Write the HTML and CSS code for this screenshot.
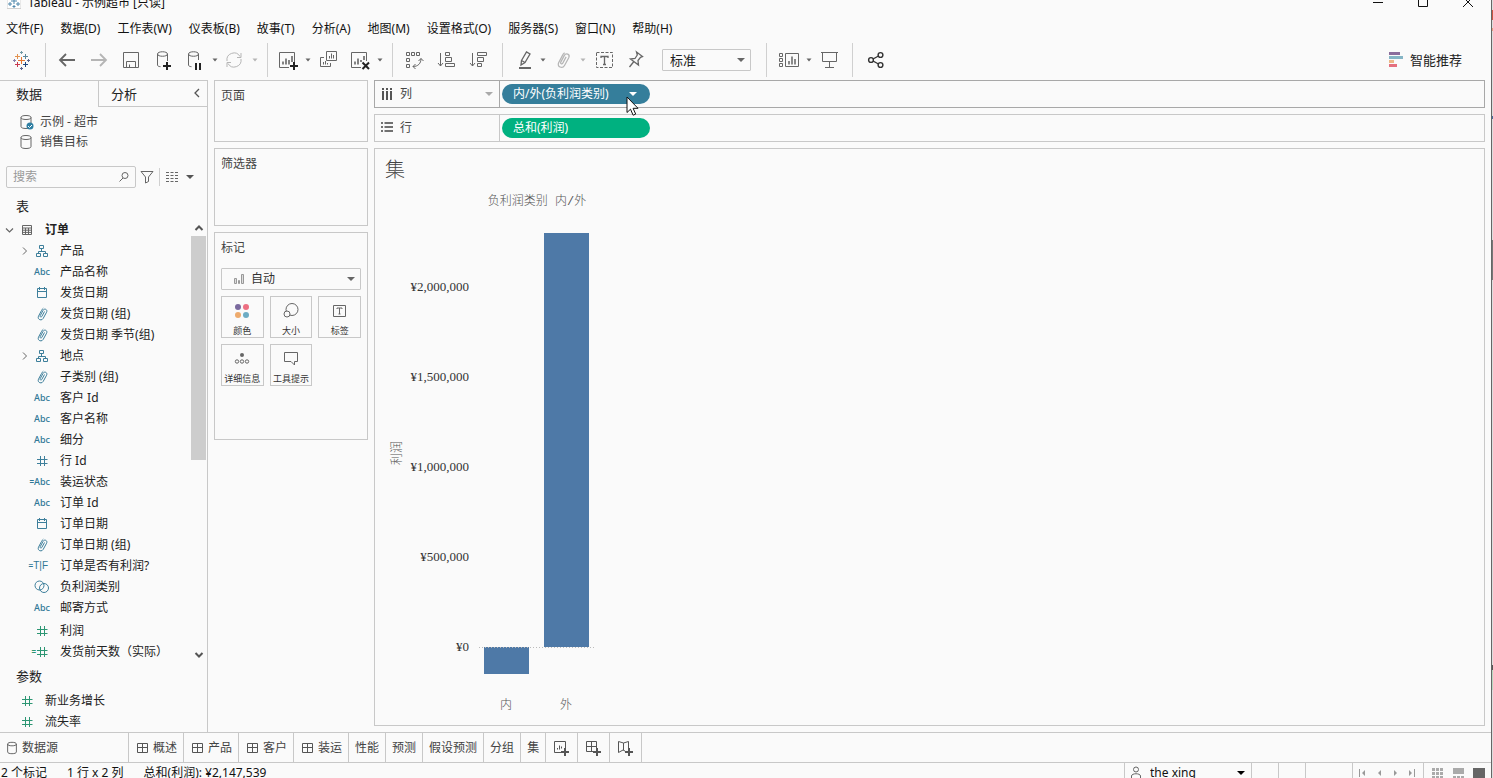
FILE: index.html
```html
<!DOCTYPE html>
<html lang="zh-CN">
<head>
<meta charset="utf-8">
<title>Tableau - 示例超市</title>
<link rel="stylesheet" href="styles.css">
</head>
<body>
<svg class="defs" aria-hidden="true">
  <symbol id="caret" viewBox="0 0 8 8"><path d="M0 2h8L4 6z" fill="currentColor"/></symbol>
  <symbol id="caret-s" viewBox="0 0 8 8"><path d="M1.500 2.500h5L4 5.500z" fill="currentColor"/></symbol>
  <symbol id="db" viewBox="0 0 16 16"><path d="M3 3.500v9c0 1.300 2 2 5 2s5-.7 5-2v-9M3 3.500c0-1.300 2-2 5-2s5 .7 5 2-2 2-5 2-5-.7-5-2z"/></symbol>
  <symbol id="dash" viewBox="0 0 12 12"><path d="M1.500 1.500h10v9h-10zM6.500 1.500v9M1.500 5.500h10"/></symbol>
  <symbol id="hier" viewBox="0 0 16 16"><path d="M5.500 2.500h4v3h-4zM7.500 5.500v3M4.500 11V8.500h7V11M2.500 10.500h4v3h-4zM9.500 10.500h4v3h-4z"/></symbol>
  <symbol id="cal" viewBox="0 0 16 16"><path d="M3.500 3.500h9v9h-9zM3.500 6.500h9M5.500 2v3M10.500 2v3"/></symbol>
  <symbol id="clip" viewBox="0 0 16 16"><path d="M10.500 5.500L7.800 10.500c-.7 1.200-2.200.4-1.600-.8l2.900-5.400c1.300-2.400 4.800-.8 3.500 1.900l-3.400 6.200c-1.700 3-6.200 1-4.700-2.200l3-5.700c.5-1 1-1.700 1.800-2.300"/></symbol>
  <symbol id="hash" viewBox="0 0 16 16"><path d="M6.500 3v10M10.500 3v10M3 6.500h10.500M3 10.500h10.500"/></symbol>
  <symbol id="sets" viewBox="0 0 16 16"><circle cx="5.500" cy="6.500" r="4.500"/><circle cx="10" cy="9" r="4.500"/></symbol>
  <symbol id="right" viewBox="0 0 12 12"><path d="M5 2.500L8.500 6 5 9.500"/></symbol>
</svg>
<div class="desktop">
<div class="app">
  <header class="title-bar">
    <svg class="app-icon" width="14" height="16" viewBox="0 0 14 16"><path d="M0 0h14v15.500H0z" fill="#fff" stroke="#d0d0d0"/><path d="M7 5v6M4 8h6M3 3v4M1 5h4M11 3v4M9 5h4M3 9v4M1 11h4M11 9v4M9 11h4M7 12v3M5.500 13.500h3" stroke="#4f87ab" fill="none"/></svg>
    <span class="caption">Tableau - 示例超市 [只读]</span>
    <div class="window-buttons">
      <button aria-label="最小化"><svg width="12" height="16" viewBox="0 0 12 16"><path d="M1 8.500h10"/></svg></button>
      <button aria-label="最大化"><svg width="12" height="16" viewBox="0 0 12 16"><path d="M1.500 3.500h9v9h-9z"/></svg></button>
      <button aria-label="关闭"><svg width="12" height="16" viewBox="0 0 12 16"><path d="M1 3l10 10M11 3L1 13"/></svg></button>
    </div>
  </header>
  <nav class="menu-bar">
    <button>文件(F)</button><button>数据(D)</button><button>工作表(W)</button><button>仪表板(B)</button><button>故事(T)</button><button>分析(A)</button><button>地图(M)</button><button>设置格式(O)</button><button>服务器(S)</button><button>窗口(N)</button><button>帮助(H)</button>
  </nav>
  <div class="toolbar">
    <div class="group">
      <button class="tool" aria-label="开始页面"><svg width="20" height="20" viewBox="0 0 20 20"><path d="M10.500 7v7M7 10.500h7" stroke="#e8762d"/><path d="M6.500 4v5M4 6.500h5" stroke="#e3924f"/><path d="M14.500 4v5M12 6.500h5" stroke="#5b879b"/><path d="M6.500 12v5M4 14.500h5" stroke="#c8394e"/><path d="M14.500 12v5M12 14.500h5" stroke="#1f457e"/><path d="M10.500 1v3M9 2.500h3" stroke="#7199a6"/><path d="M10.500 17v3M9 18.500h3" stroke="#5b6591"/><path d="M3.500 9v3M2 10.500h3" stroke="#8a7fab"/><path d="M17.500 9v3M16 10.500h3" stroke="#5b6591"/></svg></button>
    </div>
    <div class="group">
      <button class="tool" aria-label="撤消"><svg width="20" height="20" viewBox="0 0 20 20"><path stroke-width="1.800" d="M18 10H3M9 4l-6 6 6 6"/></svg></button>
      <button class="tool off" aria-label="重做"><svg width="20" height="20" viewBox="0 0 20 20"><path stroke-width="1.800" d="M2 10h15M11 4l6 6-6 6"/></svg></button>
      <button class="tool" aria-label="保存"><svg width="20" height="20" viewBox="0 0 20 20"><path d="M2.500 2.500h15v15h-15zM5.500 17.500v-6h9v6M8.500 17.500v-3"/></svg></button>
      <button class="tool" aria-label="新建数据源"><svg width="20" height="20" viewBox="0 0 20 20"><path d="M4.500 4v11c0 1 1 1.500 3 1.700M14.500 4v7M4.500 4c0-3 10-3 10 0s-10 3-10 0z"/><path stroke="#222" stroke-width="2" d="M14 12v8M10 16h8"/></svg></button>
      <button class="tool" aria-label="暂停自动更新"><svg width="20" height="20" viewBox="0 0 20 20"><path d="M3.500 4v11c0 1 1 1.500 3 1.700M13.500 4v6M3.500 4c0-3 10-3 10 0s-10 3-10 0z"/><path stroke="#222" stroke-width="2" d="M11 13v7M15 13v7"/></svg></button>
      <button class="drop" aria-label="更新选项"><svg width="8" height="8"><use href="#caret-s"/></svg></button>
      <button class="tool off" aria-label="运行更新"><svg width="20" height="20" viewBox="0 0 20 20"><path d="M2 11a7 7 0 0 1 13-4.500M16 9a7 7 0 0 1-13 4.500M16 3v4.500h-4M2 17v-4.500h4"/></svg></button>
      <button class="drop off" aria-label="运行选项"><svg width="8" height="8"><use href="#caret-s"/></svg></button>
    </div>
    <div class="group g3">
      <button class="tool" aria-label="新建工作表"><svg width="20" height="20" viewBox="0 0 20 20"><path d="M11 17.500H1.500v-15h15V12"/><path stroke-width="1.600" d="M5 14.500v-3M8 14.500v-6M11 14.500V10M14 12V6"/><path stroke="#222" stroke-width="2" d="M16 12v8M12 16h8"/></svg></button>
      <button class="drop" aria-label="新建选项"><svg width="8" height="8"><use href="#caret-s"/></svg></button>
      <button class="tool" aria-label="复制"><svg width="20" height="20" viewBox="0 0 20 20"><path d="M8.500 1.500h10v9h-10zM6 7.500H2.500v9h10V13M11.500 8.500V6M13.500 8.500v-5M15.500 8.500V5M5.500 14.500V12M7.500 14.500V11M9.500 14.500V13"/></svg></button>
      <button class="tool" aria-label="清除工作表"><svg width="20" height="20" viewBox="0 0 20 20"><path d="M11 17.500H1.500v-15h15V11"/><path stroke-width="1.600" d="M5 14.500v-3M8 14.500v-6M11 12v-2M14 10V6"/><path stroke="#222" stroke-width="2" d="M12.500 12.500l6.500 6.500M19 12.500L12.500 19"/></svg></button>
      <button class="drop" aria-label="清除选项"><svg width="8" height="8"><use href="#caret-s"/></svg></button>
    </div>
    <div class="group">
      <button class="tool" aria-label="交换行和列"><svg width="20" height="20" viewBox="0 0 20 20"><path d="M2.500 2.500h3v3h-3zM7.500 2.500h3v3h-3zM12.500 2.500h3v3h-3zM2.500 8.500h3v3h-3zM2.500 14.500h3v3h-3zM9 16.500c5 0 8-3 8-8M14.500 11l2.500-2.500 2.500 2.500M11.500 14L9 16.500l2.500 2.500"/></svg></button>
      <button class="tool" aria-label="升序排序"><svg width="20" height="20" viewBox="0 0 20 20"><path d="M4.500 3v13M2 13l2.500 3L7 13M9.500 2.500h4v3h-4zM9.500 7.500h6v4h-6zM9.500 13.500h9v3h-9z"/></svg></button>
      <button class="tool" aria-label="降序排序"><svg width="20" height="20" viewBox="0 0 20 20"><path d="M4.500 3v13M2 13l2.500 3L7 13M9.500 2.500h9v3h-9zM9.500 7.500h6v4h-6zM9.500 13.500h4v3h-4z"/></svg></button>
    </div>
    <div class="group g5">
      <button class="tool" aria-label="突出显示"><svg width="20" height="20" viewBox="0 0 20 20"><path stroke-width="1.300" d="M8.500 10.500l5-8.500 3.500 2-5 8.500-4 2.500zM8.500 10.500l3.500 2"/><path stroke-width="2" d="M6 18h12"/></svg></button>
      <button class="drop" aria-label="突出显示选项"><svg width="8" height="8"><use href="#caret-s"/></svg></button>
      <button class="tool off" aria-label="组成员"><svg width="20" height="20"><use href="#clip"/></svg></button>
      <button class="drop off" aria-label="组选项"><svg width="8" height="8"><use href="#caret-s"/></svg></button>
      <button class="tool" aria-label="显示标记标签"><svg width="20" height="20" viewBox="0 0 20 20"><path stroke-dasharray="3 1.500" d="M3.500 2.500h16v15h-16z"/><path stroke-width="1.300" d="M8 8V6.500h7V8M11.500 6.500v8M10 14.500h3"/></svg></button>
      <button class="tool" aria-label="固定轴"><svg width="20" height="20" viewBox="0 0 20 20"><path stroke-width="1.300" d="M11.500 2l6 4.500-2 .8-2.500 3.200.5 4.500-8-6 4.500-.5 2.300-3.500zM8.500 12L4.500 17"/></svg></button>
      <span class="picker fit"><select aria-label="适合"><option>标准</option></select><svg class="arrow" width="8" height="8"><use href="#caret"/></svg></span>
    </div>
    <div class="group g6">
      <button class="tool" aria-label="显示/隐藏卡"><svg width="20" height="20" viewBox="0 0 20 20"><path d="M.5 3.500h3v3h-3zM.5 8.500h3v3h-3zM.5 13.500h3v3h-3zM6.500 3.500h13v13h-13z"/><path stroke-width="1.500" d="M10 14.500V11M13 14.500v-8M16 14.500V9"/></svg></button>
      <button class="drop" aria-label="卡选项"><svg width="8" height="8"><use href="#caret-s"/></svg></button>
      <button class="tool" aria-label="演示模式"><svg width="20" height="20" viewBox="0 0 20 20"><path d="M2 2.500h17M3.500 2.500v9h14v-9M10.500 11.500v6M6 17.500h9"/></svg></button>
    </div>
    <div class="group last">
      <button class="tool" aria-label="共享"><svg width="20" height="20" viewBox="0 0 20 20"><g stroke="#333" stroke-width="1.400"><circle cx="6" cy="10" r="2.400"/><circle cx="15.500" cy="5" r="2.400"/><circle cx="15.500" cy="15" r="2.400"/><path d="M8 9l5.500-3M8 11l5.500 3"/></g></svg></button>
    </div>
    <button class="show-me"><svg width="14" height="16" viewBox="0 0 14 16"><path fill="#8b6d9c" d="M0 0h11v3H0z"/><path fill="#85b5c5" d="M0 4h14v3H0z"/><path fill="#ecb887" d="M0 8h5v3H0z"/><path fill="#e5707e" d="M0 12h8v3H0z"/></svg>智能推荐</button>
  </div>

  <main class="work">
    <aside class="sidebar">
      <div class="side-tabs" role="tablist">
        <button role="tab" class="side-tab active">数据</button>
        <button role="tab" class="side-tab">分析<svg width="8" height="12" viewBox="0 0 8 12"><path d="M6 1L2 5l4 4" fill="none" stroke="#555" stroke-width="1.300"/></svg></button>
      </div>
      <ul class="sources">
        <li><svg class="ic" width="16" height="16"><use href="#db"/><circle cx="12" cy="12" r="3.500" fill="#2f7fa3" stroke="none"/><path d="M10 12l1.500 1.500L14 11" stroke="#fff"/></svg>示例 - 超市</li>
        <li><svg class="ic" width="16" height="16"><use href="#db"/></svg>销售目标</li>
      </ul>
      <div class="search-row">
        <label class="search"><input type="text" placeholder="搜索" aria-label="搜索"><svg width="12" height="12" viewBox="0 0 12 12"><circle cx="7" cy="4.500" r="3"/><path d="M5 7L1.500 10.500"/></svg></label>
        <button aria-label="筛选字段"><svg width="14" height="14" viewBox="0 0 14 14"><path d="M1 1.500h12L8.500 7v4.500L5.500 13V7z"/></svg></button>
        <button class="view-as" aria-label="查看方式"><svg width="12" height="10" viewBox="0 0 12 10"><path d="M0 .5h3M4.500.5h3M9 .5h3M0 3.500h3M4.500 3.500h3M9 3.500h3M0 6.500h3M4.500 6.500h3M9 6.500h3M0 9.500h3M4.500 9.500h3M9 9.500h3"/></svg><svg width="8" height="8"><use href="#caret"/></svg></button>
      </div>
      <h2 class="side-heading">表</h2>
      <div class="tree">
        <ul class="fields">
          <li class="table-name"><svg class="ic gray" width="12" height="12" viewBox="0 0 12 12"><path stroke-width="1.200" d="M3 4.500l3.500 3.500L10 4.500"/></svg><svg class="ic gray" width="12" height="12" viewBox="0 0 12 12"><path d="M1.500 1.500h9v9h-9zM1.500 4h9M1.500 6.200h9M1.500 8.400h9M4.500 4v6.500M7.500 4v6.500"/></svg>订单</li>
          <li><i class="tog"><svg width="12" height="12"><use href="#right"/></svg></i><i class="kind"><svg width="16" height="16"><use href="#hier"/></svg></i>产品</li>
          <li><i class="tog"></i><i class="kind">Abc</i>产品名称</li>
          <li><i class="tog"></i><i class="kind"><svg width="16" height="16"><use href="#cal"/></svg></i>发货日期</li>
          <li><i class="tog"></i><i class="kind"><svg width="16" height="16"><use href="#clip"/></svg></i>发货日期 (组)</li>
          <li><i class="tog"></i><i class="kind"><svg width="16" height="16"><use href="#clip"/></svg></i>发货日期 季节(组)</li>
          <li><i class="tog"><svg width="12" height="12"><use href="#right"/></svg></i><i class="kind"><svg width="16" height="16"><use href="#hier"/></svg></i>地点</li>
          <li><i class="tog"></i><i class="kind"><svg width="16" height="16"><use href="#clip"/></svg></i>子类别 (组)</li>
          <li><i class="tog"></i><i class="kind">Abc</i>客户 Id</li>
          <li><i class="tog"></i><i class="kind">Abc</i>客户名称</li>
          <li><i class="tog"></i><i class="kind">Abc</i>细分</li>
          <li><i class="tog"></i><i class="kind"><svg width="16" height="16"><use href="#hash"/></svg></i>行 Id</li>
          <li><i class="tog"></i><i class="kind"><b>=</b>Abc</i>装运状态</li>
          <li><i class="tog"></i><i class="kind">Abc</i>订单 Id</li>
          <li><i class="tog"></i><i class="kind"><svg width="16" height="16"><use href="#cal"/></svg></i>订单日期</li>
          <li><i class="tog"></i><i class="kind"><svg width="16" height="16"><use href="#clip"/></svg></i>订单日期 (组)</li>
          <li><i class="tog"></i><i class="kind flag"><b>=</b>T|F</i>订单是否有利润?</li>
          <li><i class="tog"></i><i class="kind"><svg width="16" height="16"><use href="#sets"/></svg></i>负利润类别</li>
          <li><i class="tog"></i><i class="kind">Abc</i>邮寄方式</li>
          <li class="measure first"><i class="tog"></i><i class="kind"><svg width="16" height="16"><use href="#hash"/></svg></i>利润</li>
          <li class="measure"><i class="tog"></i><i class="kind calc"><b>=</b><svg width="12" height="16" viewBox="2 0 12 16"><use href="#hash" width="16" height="16"/></svg></i>发货前天数（实际）</li>
        </ul>
        <div class="scrollbar">
          <svg width="10" height="8" viewBox="0 0 10 8"><path d="M1.500 6L5 2.500 8.500 6"/></svg>
          <div class="track"><div class="thumb"></div></div>
          <svg width="10" height="8" viewBox="0 0 10 8"><path d="M1.500 2L5 5.500 8.500 2"/></svg>
        </div>
      </div>
      <h2 class="side-heading params-heading">参数</h2>
      <ul class="fields params">
        <li class="measure"><i class="kind"><svg width="16" height="16"><use href="#hash"/></svg></i>新业务增长</li>
        <li class="measure"><i class="kind"><svg width="16" height="16"><use href="#hash"/></svg></i>流失率</li>
      </ul>
    </aside>

    <div class="cards">
      <section class="card pages"><h3>页面</h3></section>
      <section class="card filters"><h3>筛选器</h3></section>
      <section class="card marks"><h3>标记</h3>
        <span class="picker mark-type"><svg class="lead" width="12" height="12" viewBox="0 0 12 12"><path fill="#ddd" stroke="#999" d="M1.500 5.500h2v5h-2zM5.500 7.500h1v3h-1zM8.500 1.500h2v9h-2z"/></svg><select aria-label="标记类型"><option>自动</option></select><svg class="arrow" width="8" height="8"><use href="#caret"/></svg></span>
        <div class="mark-grid">
          <button><svg width="20" height="20" viewBox="0 0 20 20"><g stroke="none"><circle cx="6" cy="6" r="3" fill="#7a6a9e"/><circle cx="14" cy="6" r="3" fill="#ed6f82"/><circle cx="6" cy="14" r="3" fill="#eeab6d"/><circle cx="14" cy="14" r="3" fill="#6dacc4"/></g></svg>颜色</button>
          <button><svg width="20" height="20" viewBox="0 0 20 20"><circle cx="11" cy="8.500" r="6"/><circle cx="6" cy="13" r="3" fill="#fafafa"/></svg>大小</button>
          <button><svg width="20" height="20" viewBox="0 0 20 20"><path d="M3.500 4.500h12v11h-12zM7 8V7h5v1M9.500 7v6M8.500 13h2"/></svg>标签</button>
          <button><svg width="20" height="20" viewBox="0 0 20 20"><circle cx="10" cy="6" r="2" fill="#666" stroke="none"/><circle cx="5" cy="12.500" r="1.700"/><circle cx="10" cy="12.500" r="1.700"/><circle cx="15" cy="12.500" r="1.700"/></svg>详细信息</button>
          <button><svg width="20" height="20" viewBox="0 0 20 20"><path d="M3.500 3.500h13v9h-3V16L10 12.500H3.500z"/></svg>工具提示</button>
        </div>
      </section>
    </div>

    <div class="stage">
      <div class="shelf columns">
        <div class="shelf-label"><svg width="14" height="14" viewBox="0 0 14 14"><path stroke="#555" stroke-width="2" d="M3 4v9M7 4v9M11 4v9M3 1v2M7 1v2M11 1v2"/></svg>列<svg class="shelf-drop" width="8" height="8"><use href="#caret"/></svg></div>
        <button class="pill dimension">内/外(负利润类别)<svg width="8" height="8"><use href="#caret"/></svg>
          <svg class="pointer" width="14" height="22" viewBox="0 0 14 22"><path d="M1 1v15.500l3.500-3.300 2.600 6 2.600-1.100-2.600-5.800H12z" fill="#fff" stroke="#111"/></svg></button>
      </div>
      <div class="shelf rows">
        <div class="shelf-label"><svg width="14" height="14" viewBox="0 0 14 14"><path stroke="#444" stroke-width="1.600" d="M1 2h2M4.500 2H13M1 6h2M4.500 6H13M1 10h2M4.500 10H13"/></svg>行</div>
        <button class="pill sum">总和(利润)</button>
      </div>
      <section class="view">
        <h1>集</h1>
        <svg class="chart" width="240" height="540" viewBox="0 0 240 540">
          <text class="head" x="162" y="20">负利润类别 内/外</text>
          <text class="axis-title" transform="rotate(-90 26 268)" x="26" y="268">利润</text>
          <g class="ticks">
            <text x="94" y="106">¥2,000,000</text>
            <text x="94" y="196">¥1,500,000</text>
            <text x="94" y="286">¥1,000,000</text>
            <text x="94" y="376">¥500,000</text>
            <text x="94" y="466">¥0</text>
          </g>
          <rect class="bar" x="109" y="462" width="45" height="27"/>
          <rect class="bar" x="169" y="48" width="45" height="414"/>
          <path class="zero" d="M104 462.500h116"/>
          <text class="head" x="131" y="524">内</text>
          <text class="head" x="191" y="524">外</text>
        </svg>
      </section>
    </div>
  </main>

  <nav class="sheet-tabs">
    <button class="source-tab"><svg width="12" height="14" viewBox="2 0 12 16"><use href="#db" width="16" height="16"/></svg>数据源</button>
    <button class="dash"><svg width="12" height="12"><use href="#dash"/></svg>概述</button>
    <button class="dash"><svg width="12" height="12"><use href="#dash"/></svg>产品</button>
    <button class="dash"><svg width="12" height="12"><use href="#dash"/></svg>客户</button>
    <button class="dash"><svg width="12" height="12"><use href="#dash"/></svg>装运</button>
    <button>性能</button><button>预测</button><button>假设预测</button><button>分组</button><button>集</button>
    <button class="add" aria-label="新建工作表"><svg width="16" height="16" viewBox="0 0 16 16"><path d="M8 12.500H1.500v-11h11V8M4.500 9.500V8M6.500 9.500v-4M8.500 8.500v-2"/><path stroke-width="2" d="M12 8v8M8 12h8"/></svg></button>
    <button class="add" aria-label="新建仪表板"><svg width="16" height="16" viewBox="0 0 16 16"><path d="M8 11.500H1.500v-10h10V8M6.500 1.500v10M1.500 6.500h10"/><path stroke-width="2" d="M12 8v8M8 12h8"/></svg></button>
    <button class="add" aria-label="新建故事"><svg width="16" height="16" viewBox="0 0 16 16"><path d="M8 11l-2-1-4.500 2.500v-11L6.500 3l5-1.500V8M6.500 3v7"/><path stroke-width="2" d="M12 8v8M8 12h8"/></svg></button>
  </nav>
  <footer class="status">
    <div class="stats"><span>2 个标记</span><span>1 行 x 2 列</span><span>总和(利润): ¥2,147,539</span></div>
    <div class="cell user"><svg class="ic gray" width="12" height="16" viewBox="0 0 12 16"><circle cx="6" cy="4.500" r="2.500"/><path d="M1.500 14v-3c0-3 9-3 9 0v3z"/></svg><span class="picker"><select aria-label="用户"><option>the xing</option></select><svg class="arrow" width="8" height="8"><use href="#caret"/></svg></span></div>
    <div class="cell slot"></div>
    <div class="cell slot"></div>
    <div class="cell slot wide"></div>
    <div class="cell pager">
      <button aria-label="第一个"><svg width="8" height="8" viewBox="0 0 8 8"><path d="M0 0h1v8H0zM6 1v6L3 4z"/></svg></button>
      <button aria-label="上一个"><svg width="8" height="8" viewBox="0 0 8 8"><path d="M6 1v6L3 4z"/></svg></button>
      <button aria-label="下一个"><svg width="8" height="8" viewBox="0 0 8 8"><path d="M2 1v6l3-3z"/></svg></button>
      <button aria-label="最后一个"><svg width="8" height="8" viewBox="0 0 8 8"><path d="M6 0h1v8H6zM1 1v6l3-3z"/></svg></button>
    </div>
    <div class="cell sorters">
      <button aria-label="显示工作表排序程序"><svg width="12" height="12" viewBox="0 0 12 12"><path fill="#aaa" d="M0 1h3v3H0zM4 1h3v3H4zM8 1h3v3H8zM0 5h3v3H0zM4 5h3v3H4zM8 5h3v3H8zM0 9h3v3H0zM4 9h3v3H4zM8 9h3v3H8z"/></svg></button>
      <button aria-label="显示连环缩略图"><svg width="12" height="12" viewBox="0 0 12 12"><path fill="#aaa" d="M0 1h11v6H0zM0 9h3v3H0zM4 9h3v3H4zM8 9h3v3H8z"/></svg></button>
      <button aria-label="显示标签"><svg width="12" height="12" viewBox="0 0 12 12"><path fill="#666" d="M0 1h12v11H0z"/></svg></button>
    </div>
  </footer>
</div>
</div>
</body>
</html>
```
FILE: styles.css
```css
* { box-sizing: border-box; }
body, ul, h1, h2, h3 { margin: 0; padding: 0; }
body {
  font: 12px/20px "Noto Sans", "Noto Sans CJK SC", sans-serif;
  color: #222;
  background: #fafafa;
}
ul { list-style: none; }
h1, h2, h3 { font-weight: 400; }
i { font-style: normal; }
button, select, input { font: inherit; color: inherit; background: none; border: 0; padding: 0; margin: 0; }
button { white-space: nowrap; }
svg { display: block; flex: none; fill: none; stroke: none; }
.defs { position: absolute; width: 0; height: 0; }
.defs symbol { fill: none; }
.ic, .kind svg, .tog svg { stroke: #666; }

.desktop {
  height: 100vh;
  padding-right: 1px;
  background: linear-gradient(#ddd 0 10px, #c54 10px 20px, #ddd 20px 28px, #ea9a80 28px 31px, #ddd 31px 116px, #4a6a9a 116px 119px, #ddd 119px 240px, #777 240px 280px, #ddd 280px 665px, #555 665px 670px, #b8d8c0 670px 690px, #ddd 690px);
}
.app {
  height: 100%;
  display: flex;
  flex-direction: column;
  overflow: hidden;
  background: #fafafa;
  border-right: 1px solid #666;
}

.title-bar { height: 16px; flex: none; display: flex; align-items: flex-end; overflow: hidden; line-height: 26px; color: #111; }
.app-icon { margin: 0 7px 7px 7px; }
.window-buttons { margin-left: auto; display: flex; margin-right: 1px; }
.window-buttons button { width: 45px; height: 28px; display: grid; place-items: center; }
.window-buttons svg { stroke: #111; }

.menu-bar { height: 24px; flex: none; display: flex; align-items: center; gap: 17px; padding: 2px 0 0 6px; color: #111; }

.toolbar { height: 40px; flex: none; display: flex; align-items: stretch; }
.group { display: flex; align-items: center; margin: 3px 0; padding: 0 8px 0 5px; border-right: 1px solid #d0d0d0; }
.group.last { border: 0; padding-left: 6px; }
.g3 { padding-left: 4px; }
.g5 { padding: 0 15px 0 4px; }
.g6 { padding: 0 7px 0 6px; }
.tool { width: 32px; height: 32px; display: grid; place-items: center; color: #666; }
.tool svg { stroke: currentColor; }
.drop { width: 8px; height: 32px; display: grid; place-items: center; color: #666; }
.tool.off, .drop.off { color: #b5b5b5; }
.show-me { margin-left: auto; padding-right: 29px; display: flex; align-items: center; gap: 7px; font-size: 13px; }

.picker { position: relative; display: flex; align-items: center; }
.picker select { appearance: none; width: 100%; height: 100%; }
.picker .arrow { position: absolute; right: 5px; color: #666; pointer-events: none; }
.fit { width: 89px; height: 22px; margin-left: 11px; border: 1px solid #c8c8c8; border-radius: 1px; font-size: 13px; }
.fit select { padding-left: 7px; }

.work { flex: 1; min-height: 0; display: flex; gap: 6px; padding-right: 6px; }

.sidebar { width: 208px; flex: none; border-right: 1px solid #c8c8c8; display: flex; flex-direction: column; overflow: hidden; }
.side-tabs { flex: none; display: flex; height: 27px; border-top: 1px solid #c8c8c8; font-size: 13px; }
.side-tab { flex: 1; text-align: left; padding-left: 12px; border-left: 1px solid #c8c8c8; border-bottom: 1px solid #c8c8c8; display: flex; align-items: center; justify-content: space-between; padding-right: 6px; }
.side-tab.active { flex: none; width: 98px; padding-left: 16px; border: 0; }
.sources { padding: 5px 0 14px 18px; }
.sources li { display: flex; align-items: center; gap: 6px; height: 20px; color: #444; }
.search-row { display: flex; align-items: center; padding-left: 6px; height: 22px; }
.search-row svg { stroke: #666; }
.search { width: 130px; height: 22px; display: flex; align-items: center; border: 1px solid #c8c8c8; border-radius: 2px; padding: 0 5px 0 6px; margin-right: 4px; }
.search input { flex: 1; min-width: 0; outline: 0; }
.search input::placeholder { color: #999; opacity: 1; }
.view-as { display: flex; align-items: center; gap: 8px; height: 18px; margin-left: 5px; padding-left: 6px; border-left: 1px solid #d0d0d0; color: #555; }
.view-as svg:last-child { stroke: none; }
.side-heading { font-size: 13px; padding-left: 16px; margin: 8px 0 3px; flex: none; }
.params-heading { margin: 4px 0; }
.tree { display: flex; flex: none; }
.fields { flex: 1; min-width: 0; }
.fields li { display: flex; align-items: center; height: 21px; padding-left: 18px; white-space: nowrap; }
.fields .table-name { padding-left: 3px; font-weight: 700; }
.table-name .gray + .gray { margin: 0 12px 0 6px; }
.tog { width: 12px; flex: none; }
.kind { width: 20px; margin-right: 10px; flex: none; display: flex; align-items: center; justify-content: flex-end; font-size: 9px; font-weight: 500; color: #2f7896; }
.kind b { font-size: 8px; }
.kind svg { stroke: #3d7f9b; }
.kind.flag { font-family: "Liberation Sans", sans-serif; font-size: 10px; padding-right: 2px; }
.kind.calc { padding-right: 2px; }
.measure .kind { color: #2c9673; }
.measure .kind svg { stroke: #2c9673; }
.fields .first { margin-top: 2px; }
.params li { padding-left: 15px; }
.params { flex: none; }
.scrollbar { width: 16px; flex: none; display: flex; flex-direction: column; align-items: center; padding: 5px 0 3px; }
.scrollbar svg { stroke: #555; stroke-width: 2; }
.track { flex: 1; width: 100%; padding: 4px 1px 0 0; }
.thumb { height: 54%; background: #cdcdcd; }

.cards { width: 154px; flex: none; display: flex; flex-direction: column; gap: 6px; }
.card { border: 1px solid #c8c8c8; padding: 0 6px; }
.card h3 { font-size: 12px; line-height: 30px; color: #444; }
.pages { min-height: 62px; }
.filters { min-height: 78px; }
.marks { min-height: 208px; }
.mark-type { height: 22px; margin-top: 5px; border: 1px solid #c8c8c8; border-radius: 1px; color: #333; }
.mark-type .lead { position: absolute; left: 11px; }
.mark-type select { padding-left: 29px; }
.mark-grid { display: grid; grid-template-columns: repeat(3, 1fr); gap: 6px; margin-top: 6px; }
.mark-grid button { height: 42px; border: 1px solid #c8c8c8; display: flex; flex-direction: column; align-items: center; font-size: 9px; line-height: 12px; padding-top: 4px; gap: 4px; color: #333; }
.mark-grid svg { stroke: #666; }

.stage { flex: 1; min-width: 0; display: flex; flex-direction: column; gap: 6px; padding-bottom: 6px; }
.shelf { height: 28px; flex: none; border: 1px solid #c8c8c8; display: flex; align-items: center; }
.columns { border-color: #a8a8a8; }
.shelf-label { width: 125px; align-self: stretch; flex: none; display: flex; align-items: center; gap: 6px; padding: 0 6px 0 5px; margin-right: 2px; border-right: 1px solid #c8c8c8; color: #444; }
.columns .shelf-label { border-color: #a8a8a8; }
.shelf-drop { margin-left: auto; color: #aaa; }
.pill { position: relative; width: 148px; height: 20px; border-radius: 10px; padding: 0 13px 0 11px; color: #fff; display: flex; align-items: center; justify-content: space-between; }
.dimension { background: #357e9b; }
.sum { background: #00b180; }
.pointer { position: absolute; left: 124px; top: 12px; }

.view { flex: 1; min-height: 0; border: 1px solid #c8c8c8; overflow: hidden; }
.view h1 { font-size: 20px; font-weight: 300; line-height: 24px; padding: 9px 10px 3px; color: #444; }
.chart { font-family: "Liberation Serif", "Noto Sans CJK SC", serif; font-weight: 300; }
.head { font: 300 12px "Liberation Mono", "Noto Sans CJK SC", monospace; text-anchor: middle; fill: #555; }
.axis-title { font-size: 12px; text-anchor: middle; fill: #555; }
.ticks { font-size: 13px; text-anchor: end; fill: #333; }
.bar { fill: #4e79a7; }
.zero { stroke: #bbb; stroke-dasharray: 1 2; }

.sheet-tabs { height: 31px; flex: none; display: flex; border-top: 1px solid #c8c8c8; border-bottom: 1px solid #c8c8c8; color: #444; }
.sheet-tabs button { padding: 0 6px; border-right: 1px solid #c8c8c8; display: flex; align-items: center; gap: 5px; }
.sheet-tabs svg { stroke: #555; }
.sheet-tabs .source-tab { width: 129px; gap: 4px; }
.sheet-tabs .dash { padding-left: 7px; }
.sheet-tabs .add { width: 32px; padding: 0 8px 0 7px; }

.status { height: 15px; flex: none; display: flex; align-items: flex-start; overflow: hidden; color: #111; }
.stats { flex: 1; display: flex; gap: 20px; padding-left: 1px; }
.cell { height: 20px; flex: none; border-left: 1px solid #c8c8c8; display: flex; align-items: center; }
.user { width: 127px; padding-left: 5px; gap: 8px; }
.user .picker { flex: 1; }
.user .arrow { right: 6px; color: #000; }
.slot { width: 27px; }
.slot.wide { width: 47px; }
.pager { width: 71px; padding: 0 7px 0 6px; justify-content: space-between; }
.pager svg { fill: #999; }
.sorters { width: 68px; justify-content: space-between; padding: 0 6px 0 8px; }
```
